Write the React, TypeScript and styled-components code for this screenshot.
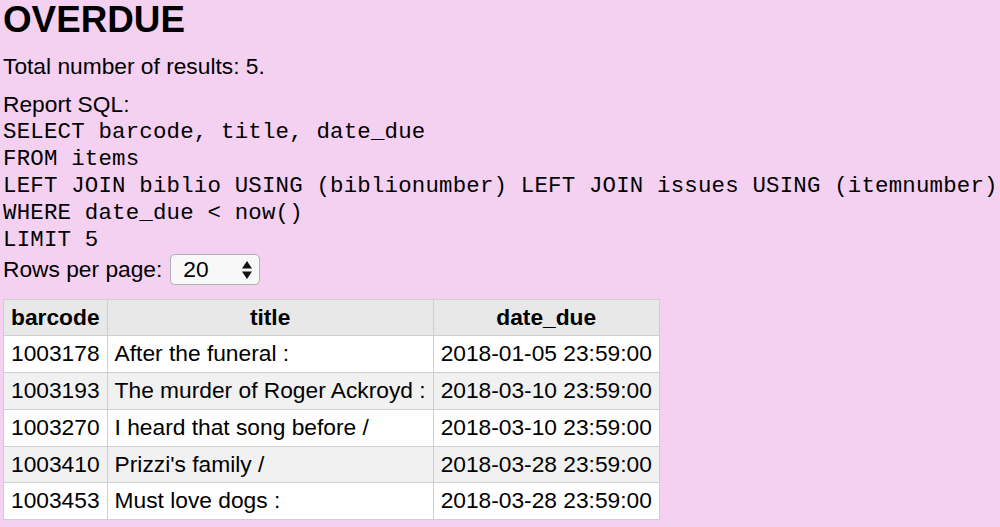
import React from "react";
import styled, { createGlobalStyle } from "styled-components";

const GlobalStyle = createGlobalStyle`
  html, body {
    margin: 0;
    padding: 0;
    background: #f4d0f1;
  }
  body {
    font-family: "Liberation Sans", Arial, sans-serif;
    color: #000;
  }
`;

const Page = styled.div`
  padding: 0 3px;
  font-size: 22.75px;
`;

const Title = styled.h1`
  margin: 0;
  font-size: 36.8px;
  line-height: 40px;
  font-weight: bold;
`;

const Para = styled.p<{ $gap: number }>`
  margin: ${(p) => p.$gap}px 0 0;
  line-height: 26px;
`;

const Sql = styled.pre`
  margin: 1.5px 0 0;
  font-family: "Liberation Mono", "Courier New", monospace;
  font-size: 22.4px;
  letter-spacing: 0.19px;
  line-height: 27px;
  white-space: pre;
`;

const RowsLine = styled.div`
  display: flex;
  align-items: center;
  gap: 8px;
  line-height: 26px;
`;

const SelectWrap = styled.div`
  position: relative;
  width: 90px;
  height: 31px;
`;

const Select = styled.select`
  appearance: none;
  -webkit-appearance: none;
  box-sizing: border-box;
  width: 100%;
  height: 100%;
  margin: 0;
  padding: 0 0 0 12px;
  border: 1.5px solid #b0b0b0;
  border-radius: 5px;
  background: #f8f8f8;
  font-family: "Liberation Sans", Arial, sans-serif;
  font-size: 22.75px;
  color: #000;
`;

const Arrows = styled.svg`
  position: absolute;
  right: 8px;
  top: 7px;
  pointer-events: none;
`;

const Table = styled.table`
  margin-top: 14px;
  border-collapse: collapse;
  font-size: 22.75px;
  line-height: 25.75px;
`;

const HeadCell = styled.th`
  padding: 5px 7px;
  border: 1px solid #cfcfcf;
  background: #e8e8e8;
  font-weight: bold;
  text-align: center;
`;

const Row = styled.tr<{ $alt: boolean }>`
  background: ${(p) => (p.$alt ? "#f1f1f1" : "#ffffff")};
`;

const Cell = styled.td`
  padding: 5px 7px;
  border: 1px solid #cfcfcf;
  text-align: left;
  white-space: nowrap;
`;

const rows = [
  ["1003178", "After the funeral :", "2018-01-05 23:59:00"],
  ["1003193", "The murder of Roger Ackroyd :", "2018-03-10 23:59:00"],
  ["1003270", "I heard that song before /", "2018-03-10 23:59:00"],
  ["1003410", "Prizzi's family /", "2018-03-28 23:59:00"],
  ["1003453", "Must love dogs :", "2018-03-28 23:59:00"],
];

const sql = `SELECT barcode, title, date_due
FROM items
LEFT JOIN biblio USING (biblionumber) LEFT JOIN issues USING (itemnumber)
WHERE date_due < now()
LIMIT 5`;

export default function App() {
  return (
    <>
      <GlobalStyle />
      <Page>
        <Title>OVERDUE</Title>
        <Para $gap={13}>Total number of results: 5.</Para>
        <Para $gap={12}>Report SQL:</Para>
        <Sql>{sql}</Sql>
        <RowsLine>
          <span>Rows per page:</span>
          <SelectWrap>
            <Select defaultValue="20">
              <option value="10">10</option>
              <option value="20">20</option>
              <option value="50">50</option>
              <option value="100">100</option>
            </Select>
            <Arrows width="10" height="18" viewBox="0 0 10 18">
              <polygon points="5,0 10,7.5 0,7.5" fill="#111" />
              <polygon points="0,10.5 10,10.5 5,18" fill="#111" />
            </Arrows>
          </SelectWrap>
        </RowsLine>
        <Table>
          <thead>
            <tr>
              <HeadCell>barcode</HeadCell>
              <HeadCell>title</HeadCell>
              <HeadCell>date_due</HeadCell>
            </tr>
          </thead>
          <tbody>
            {rows.map((r, i) => (
              <Row key={r[0]} $alt={i % 2 === 1}>
                <Cell>{r[0]}</Cell>
                <Cell>{r[1]}</Cell>
                <Cell>{r[2]}</Cell>
              </Row>
            ))}
          </tbody>
        </Table>
      </Page>
    </>
  );
}
